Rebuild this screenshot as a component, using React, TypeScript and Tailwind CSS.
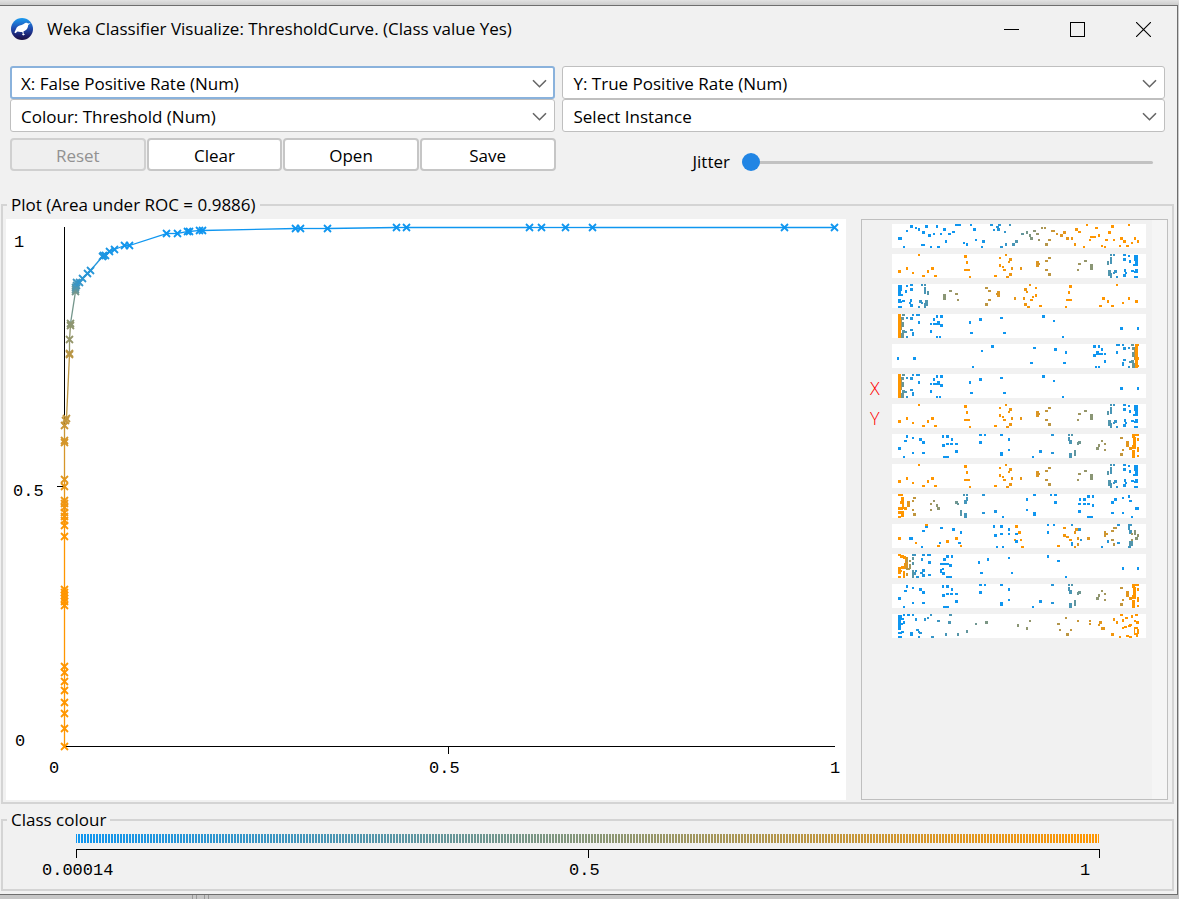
import type { ReactNode } from "react";

type Stop = [number, number];

function shade(t: number): string {
  const r = Math.round(t * 240 + 15);
  const b = Math.round((1 - t) * 240);
  return `rgb(${r},150,${b})`;
}

function at(stops: Stop[], x: number): number {
  if (x <= stops[0][0]) return stops[0][1];
  for (let i = 1; i < stops.length; i++) {
    const [x1, t1] = stops[i];
    const [x0, t0] = stops[i - 1];
    if (x <= x1) return t0 + ((t1 - t0) * (x - x0)) / (x1 - x0);
  }
  return stops[stops.length - 1][1];
}

type Mark = { x: number; y: number; w: number; h: number; t: number };

/* Each mark is "x,y,w,h" with an optional fifth value that fixes its shade. */
function marks(data: string, stops: Stop[]): Mark[] {
  return data
    .trim()
    .split(/\s+/)
    .map((item) => {
      const [x, y, w, h, t] = item.split(",").map(Number);
      return { x, y, w, h, t: t === undefined ? at(stops, x) : t };
    });
}

function mirror(list: Mark[]): Mark[] {
  return list.map((m) => ({ ...m, x: 252 - m.x - m.w }));
}

const sampleSize = marks(
  `6,13,4,3 11,22,2,2 14,6,2,2 18,1,3,3 23,3,2,2 26,4,2,3 29,20,4,2 30,7,3,3 33,1,3,3 36,10,3,3 38,22,2,2
  41,9,2,2 44,1,2,3 45,22,3,2 48,9,2,2 51,4,3,3 53,16,2,3 56,9,3,2 60,7,3,2 63,0,6,2 71,18,2,2 74,19,2,3
  78,0,2,2 81,4,3,3 83,15,2,2 89,22,2,2 90,16,3,3 98,0,3,2 101,5,2,2 104,2,3,2 106,0,3,2 105,4,3,3
  108,22,3,2 112,7,2,2 113,19,2,3 117,0,2,2 120,19,3,3 123,16,3,3 129,9,3,2 134,7,2,3 137,10,2,3
  138,13,3,3 141,6,3,2 144,9,3,2 146,15,2,2 149,3,2,2 152,3,2,2 153,19,3,3 156,15,3,2 159,6,4,2 164,9,2,2
  168,10,3,3 171,7,3,3 174,13,3,3 179,13,2,3 182,19,2,3 183,4,3,3 186,7,3,2 191,22,2,2 194,0,2,2
  197,15,2,2 198,12,6,2 203,3,3,2 206,10,2,3 209,21,2,2 212,22,2,2 213,15,3,2 216,7,3,3 219,1,3,3
  221,15,2,2 227,21,2,2 228,13,3,3 231,16,3,3 234,21,3,2 236,0,2,2 239,18,2,2 242,13,2,3 245,16,2,3`,
  [[80, 0], [105, 0.1], [117, 0.2], [129, 0.35], [140, 0.5], [150, 0.65], [165, 0.85], [190, 1]],
);

const truePositives = marks(
  `6,16,3,3 14,13,2,3 20,18,2,2 26,0,2,2 30,21,3,2 35,16,2,3 39,13,3,3 42,21,3,2 72,1,3,3 74,7,2,3
  72,15,6,2 77,22,2,2 102,21,3,2 107,3,2,2 107,10,2,3 110,12,2,2 111,15,3,2 113,0,2,2 114,22,3,2
  117,4,3,3 116,7,2,2 119,13,2,3 117,19,3,3 128,13,2,3 144,7,3,6 146,9,2,2 153,6,3,2 156,3,3,2
  153,15,3,2 156,19,3,3 185,15,2,2 186,9,3,2 192,6,3,2 198,10,3,6 215,7,2,4 218,0,2,2 221,0,2,2
  218,3,2,7 216,16,3,6 218,19,2,5 221,18,2,2 222,16,3,3 224,22,2,2 231,0,3,2 231,4,3,3 236,1,2,2
  237,6,2,3 232,15,2,3 231,20,3,3 233,18,2,2 239,16,3,2 242,1,4,6 243,7,3,5 241,10,3,2 243,15,3,3
  242,17,4,2 242,22,4,2`,
  [[106, 1], [117, 0.93], [144, 0.85], [156, 0.72], [186, 0.6], [200, 0.5], [216, 0.28], [225, 0.1], [235, 0]],
);

const falsePositives = marks(
  `10,0,3,2 9,3,3,3 9,8,3,3 9,11,3,2 10,16,3,3 12,17,3,2 9,19,3,5 9,5,1,11,0.6 6,0,3,24 14,22,2,2 14,3,2,2
  20,0,2,2 18,3,3,3 18,15,3,2 20,18,2,4 24,0,4,2 26,7,2,3 38,9,2,2 38,16,2,3 41,4,2,3 41,9,4,2 44,1,2,3
  45,7,3,4 48,1,3,3 48,10,3,3 44,22,2,2 47,22,2,2 77,7,2,3 78,18,3,2 87,4,3,3 108,3,3,2 111,18,3,2
  150,1,3,3 161,6,2,2 170,22,2,2 228,13,3,3 245,13,2,3`,
  [[7, 1], [8, 0.4], [12, 0.25], [14, 0.12], [22, 0.05], [30, 0]],
);

const trueNegatives = [...mirror(falsePositives), ...marks("245,0,2,2 245,13,2,3 245,21,2,2", [[0, 1]])];

const precision = marks(
  `6,13,3,3 11,22,2,2 12,6,3,2 14,1,2,3 20,3,2,2 20,18,2,2 27,4,3,3 30,7,3,3 30,18,3,2 50,1,2,3 50,10,3,3
  54,1,3,3 54,9,3,2 51,22,6,2 59,4,2,3 58,9,3,2 63,9,3,2 63,16,3,3 87,0,3,2 92,0,2,2 87,7,3,3 108,0,3,2
  108,18,3,4 116,4,2,3 116,15,2,2 140,22,2,2 147,16,3,3 159,0,3,2 159,18,3,2 176,0,2,2 179,0,2,2
  176,3,2,4 177,6,3,4 177,19,3,5 182,16,2,6 185,8,2,3 186,7,3,3 204,13,3,3 206,10,2,3 209,6,2,2
  212,9,2,2 212,15,2,2 228,3,3,2 230,15,2,2 228,19,3,3 234,7,3,6 237,13,3,3 240,0,3,4 241,3,3,8
  240,11,4,4 240,16,3,8 243,0,4,2 245,4,2,3 245,13,2,5 245,21,2,2`,
  [[140, 0], [160, 0.1], [177, 0.25], [186, 0.4], [204, 0.52], [212, 0.62], [228, 0.75], [236, 0.92], [240, 1]],
);

const fallout = marks(
  `6,0,5,2 9,3,3,5 8,7,4,3 10,10,2,5 6,13,5,3 6,17,3,3 9,17,3,6 6,22,3,2 15,7,3,6 12,13,3,3 20,6,2,2
  21,3,3,2 20,15,2,2 21,19,3,3 38,9,2,2 38,15,2,2 41,6,2,2 44,10,2,3 45,13,3,3 63,7,3,3 65,9,2,2
  68,16,2,6 71,0,2,2 74,0,2,2 74,3,2,4 72,6,3,4 72,19,3,5 90,0,3,2 90,18,3,2 102,16,3,3 110,22,2,2
  134,4,2,3 134,15,2,2 141,0,3,2 141,18,3,4 158,0,2,2 162,0,3,2 162,7,3,3 186,9,3,2 186,16,3,3
  187,4,2,3 191,9,3,2 191,4,3,3 195,1,3,3 200,1,2,3 195,9,3,2 200,10,2,3 195,22,6,2 219,7,3,3
  222,4,3,3 219,18,3,2 230,3,2,2 230,18,2,2 236,1,2,3 237,6,3,2 243,13,4,3 239,22,2,2`,
  [[11, 1], [15, 0.88], [20, 0.75], [38, 0.62], [45, 0.52], [63, 0.4], [72, 0.22], [90, 0.1], [110, 0]],
);

const fMeasure = marks(
  `33,0,3,2,1 33,2,3,2,0 30,6,3,2,0 48,3,3,2,0 60,4,3,3,0 68,7,2,3,0 6,13,3,3,1 17,13,4,3,0 23,18,2,2,1
  29,22,2,2,0 45,21,3,2,1 47,18,2,2,0 54,16,3,3,1 63,13,3,3,1 66,18,3,2,0 68,21,2,2,1 101,1,2,3,0
  102,10,3,3,0 104,22,2,2,0 108,1,3,3,0 108,9,3,2,0 110,22,2,2,0 116,4,2,3,0 116,9,2,2,0 123,1,3,3,1
  126,7,3,3,1 123,9,3,2,0 122,15,2,2,1 123,16,3,3,0 128,15,2,2,1 129,22,3,2,1 155,0,2,2,0 161,0,2,2,0
  155,7,2,3,0 165,21,3,2,1 171,3,3,2,0.95 171,10,3,3,0.95 174,12,3,2,0.95 179,0,2,2,0.1 183,4,3,3,0.9
  186,4,3,3,0.1 182,7,2,3,0.9 177,15,3,2,0.95 179,18,2,4,0.05 185,13,2,3,0.9 188,15,2,2,0.1
  185,19,2,3,0.85 182,22,2,2,0.9 195,13,3,3,0.85 209,22,2,2,0.05 212,7,2,6,0.8 214,9,2,2,0.8
  219,6,3,2,0.75 221,3,4,2,0.72 225,0,3,2,0.1 215,16,2,3,0.1 219,15,3,2,0.7 221,19,2,3,0.7
  225,18,3,2,0.1 236,0,4,2,0.2 236,2,2,4,0.2 237,6,3,4,0.22 239,9,2,2,0.6 242,6,2,5,0.5 245,10,2,3,0.55
  243,13,3,3,0.5 239,15,2,2,0.6 237,17,4,5,0.28 236,22,3,2,0.2`,
  [[0, 0]],
);

const sampleRatio = marks(
  `6,0,3,2 8,1,4,3 11,2,3,3 13,4,2,3,1 6,13,3,7 9,12,3,3 12,9,3,6,0.95 11,17,2,7 6,22,3,2 8,16,2,2
  13,7,3,8,0.85 14,3,2,2,0.8 14,5,2,3,0.7 17,6,2,2,0.6 17,10,2,5,0.6 14,14,4,2,0.65 14,19,2,3,0.8
  20,0,4,2,0.2 20,3,2,3,0.35 20,8,2,3,0.3 20,16,2,8,0.3 22,18,2,3,0.2 23,16,2,2,0.15 24,22,3,2,0.1
  29,4,2,3 30,0,3,2 35,0,4,2 36,7,3,3 30,15,3,3 28,18,3,2 30,20,3,3 36,20,3,2 48,15,2,4 50,14,2,2
  51,4,3,3 54,1,3,3 59,1,2,3 48,9,9,2 57,10,3,3 50,18,3,3 54,22,6,2 86,7,2,3 95,4,2,3 88,18,3,2
  116,3,2,2 119,18,2,2 155,1,2,3 165,6,3,2 173,22,2,2 230,13,2,3 245,13,2,3`,
  [[13, 1], [28, 0.08], [40, 0]],
);

const threshold = marks(
  `6,1,4,5 6,6,3,10 9,4,3,2 11,7,2,3 9,9,2,2 6,18,4,2 6,22,4,2 9,17,3,2 11,0,2,2 15,0,3,2 20,0,2,2 23,4,2,3
  18,18,3,4 24,15,3,2 26,17,2,2 27,18,3,2 26,22,2,2 32,4,2,3 35,3,2,2 38,0,2,2 39,22,3,2 45,6,3,2
  53,19,2,3 56,7,3,3 57,0,3,2 65,19,2,3 74,16,2,3 83,9,2,2 93,7,3,3 125,10,2,3 134,13,2,3 137,6,2,2
  165,9,3,2 167,15,2,2 173,3,2,2 174,19,3,3 178,15,2,2 185,6,2,2 197,6,2,2 197,9,2,2 207,7,3,3
  206,10,2,2 209,13,4,3 219,19,3,3 221,4,2,3 224,7,2,3 228,0,3,2 227,22,2,2 230,5,2,3 233,3,3,2
  232,12,3,2 230,13,2,2 236,11,3,2 237,10,3,2 234,21,3,2 237,22,3,2 239,1,2,3 243,0,3,2 242,6,2,2
  244,7,3,3 242,13,4,2 242,15,1,5 245,15,2,5 242,19,4,2 244,21,2,2`,
  [[15, 0], [30, 0.12], [56, 0.25], [93, 0.45], [130, 0.52], [165, 0.68], [197, 0.82], [220, 0.95], [230, 1]],
);

const attributes: { name: string; axis?: string; data: Mark[] }[] = [
  { name: "Instance number", data: sampleSize },
  { name: "True Positives", data: truePositives },
  { name: "False Negatives", data: mirror(truePositives) },
  { name: "False Positives", data: falsePositives },
  { name: "True Negatives", data: trueNegatives },
  { name: "False Positive Rate", axis: "X", data: falsePositives },
  { name: "True Positive Rate", axis: "Y", data: truePositives },
  { name: "Precision", data: precision },
  { name: "Recall", data: truePositives },
  { name: "Fallout", data: fallout },
  { name: "FMeasure", data: fMeasure },
  { name: "Sample Size", data: sampleRatio },
  { name: "Lift", data: precision },
  { name: "Threshold", data: threshold },
];

/* Curve points in plot coordinates: x, y, threshold. */
const curve: [number, number, number][] = [
  [58, 527, 1], [58, 509, 1], [58, 494, 1], [58, 483, 1], [58, 471, 1], [58, 462, 1], [58, 453, 1], [58, 447, 1],
  [58, 386, 1], [58, 382, 1], [58, 379, 1], [58, 376, 1], [58, 373, 1], [58, 370, 1], [58, 317, 1], [58, 306, 0.99],
  [58, 301, 0.98], [58, 297, 0.97], [58, 293, 0.96], [58, 288, 0.95], [58, 284, 0.94], [58, 281, 0.93],
  [58, 267, 0.9], [58, 260, 0.88], [58, 223, 0.83], [58, 221, 0.82], [58, 206, 0.78], [59, 201, 0.76],
  [60, 199, 0.75], [63, 135, 0.72], [63, 134, 0.7], [63, 120, 0.56], [64, 106, 0.54], [64, 104, 0.52],
  [69, 72, 0.42], [69, 70, 0.36], [69, 68, 0.3], [70, 66, 0.24], [70, 63, 0.2], [73, 63, 0.16], [76, 59, 0.13],
  [81, 54, 0.11], [84, 51, 0.1], [96, 37, 0.08], [97, 36, 0.07], [99, 36, 0.06], [103, 32, 0.04], [108, 30, 0.03],
  [118, 26, 0.02], [123, 26, 0.01], [160, 14, 0], [171, 14, 0], [181, 12, 0], [183, 12, 0], [193, 11, 0],
  [196, 11, 0], [289, 9, 0], [294, 9, 0], [321, 9, 0], [390, 8, 0], [400, 8, 0], [523, 8, 0], [535, 8, 0],
  [559, 8, 0], [586, 8, 0], [778, 8, 0], [828, 8, 0],
];

function WekaIcon() {
  return (
    <svg width="22" height="22" viewBox="0 0 22 22" aria-hidden="true">
      <defs>
        <linearGradient id="weka" x1="0" y1="0" x2="0" y2="1">
          <stop offset="0" stopColor="#1b9cf0" />
          <stop offset="0.45" stopColor="#1f4fb4" />
          <stop offset="0.8" stopColor="#1c1f6b" />
          <stop offset="1" stopColor="#1c1040" />
        </linearGradient>
      </defs>
      <circle cx="11" cy="11" r="11" fill="url(#weka)" />
      <path
        d="M3.4 14.6 4.8 11.4C5.8 8.8 8 7.4 10.6 7.1 12.3 6.8 13.1 5.2 14.9 4.8 15.8 4.6 16.6 4.9 17 5.4L19.6 5.3 17.2 6.9C16.9 9.2 16.4 11.3 14.2 12.6L12.4 13.6 12.7 15.8 14 16.6 12.2 17.4 11 16.4 11.8 15.8 11.3 14 9.5 13.9 6.5 13.6 4.4 15.3Z"
        fill="#fff"
      />
    </svg>
  );
}

function Combo({ label, value, focused }: { label: string; value: string; focused?: boolean }) {
  return (
    <div className="relative">
      <select
        aria-label={label}
        className={
          focused
            ? "block h-[33px] w-full appearance-none rounded-[3px] border-2 border-[#8ab2dc] bg-white pt-[2px] pr-8 pl-[9px] text-[17px] leading-6 outline-none"
            : "block h-[33px] w-full appearance-none rounded-[3px] border border-[#bfbfbf] bg-white pt-[2px] pr-8 pl-[10px] text-[17px] leading-6 outline-none"
        }
      >
        <option>{value}</option>
      </select>
      <svg
        className="pointer-events-none absolute top-[13px] right-2"
        width="15"
        height="9"
        viewBox="0 0 15 9"
        fill="none"
        stroke="#666"
        strokeWidth="1.6"
        aria-hidden="true"
      >
        <path d="M1 1.2 7.5 7.7 14 1.2" />
      </svg>
    </div>
  );
}

function PushButton({ children, disabled }: { children: ReactNode; disabled?: boolean }) {
  return (
    <button
      type="button"
      disabled={disabled}
      className="h-[33px] flex-1 rounded-[4px] border-2 border-[#c6c6c6] bg-white pt-[2px] text-[17px] leading-6 disabled:border-[#d0d0d0] disabled:bg-[#efefef] disabled:text-[#929292]"
    >
      {children}
    </button>
  );
}

function Group({ title, children }: { title: string; children: ReactNode }) {
  return (
    <fieldset className="mr-[3px] ml-px min-w-0 border-2 border-[#d4d4d4]">
      <legend className="ml-1 px-1 text-[17px] leading-6">{title}</legend>
      {children}
    </fieldset>
  );
}

function Plot() {
  return (
    <svg
      className="block h-auto w-full bg-white font-['Liberation_Mono',monospace] text-[17px]"
      viewBox="0 0 840 581"
      role="img"
      aria-label="Threshold curve"
    >
      <path
        d="M58.5 8V528M58 527.5H829M51 267.5H58M442.5 528V535"
        fill="none"
        stroke="#000"
        shapeRendering="crispEdges"
      />
      <g strokeWidth="1.3" strokeLinecap="square">
        {curve.slice(1).map(([x, y, t], i) => (
          <line key={i} x1={curve[i][0] + 0.5} y1={curve[i][1] + 0.5} x2={x + 0.5} y2={y + 0.5} stroke={shade(t)} />
        ))}
      </g>
      <g strokeWidth="1.8" fill="none">
        {curve.map(([x, y, t], i) => (
          <path key={i} d={`M${x - 3} ${y - 3}l7 7m0-7l-7 7`} stroke={shade(t)} />
        ))}
      </g>
      <g fill="#000">
        <text x="8" y="28">1</text>
        <text x="7" y="277">0.5</text>
        <text x="9" y="527">0</text>
        <text x="43" y="554">0</text>
        <text x="423" y="554">0.5</text>
        <text x="824" y="554">1</text>
      </g>
    </svg>
  );
}

function Strip({ name, data }: { name: string; data: Mark[] }) {
  return (
    <svg
      className="block h-6 w-[254px] bg-white"
      viewBox="0 0 254 24"
      shapeRendering="crispEdges"
      role="img"
      aria-label={name}
    >
      {data.map((m, i) => (
        <rect key={i} x={m.x} y={m.y} width={m.w} height={m.h} fill={shade(m.t)} />
      ))}
    </svg>
  );
}

function ColourScale() {
  const bars = Array.from({ length: 342 }, (_, i) => i);
  return (
    <svg
      className="block h-auto w-full font-['Liberation_Mono',monospace] text-[17px]"
      viewBox="0 0 1169 57"
      role="img"
      aria-label="Class colour scale"
    >
      <g shapeRendering="crispEdges">
        {bars.map((i) => (
          <rect
            key={i}
            x={i === 0 ? 73 : 72 + i * 3}
            y="2"
            width={i === 0 || i === 341 ? 1 : 2}
            height="9"
            fill={shade(i / 341)}
          />
        ))}
        <path d="M73.5 26V17.5H1096.5V26M585.5 17V26" fill="none" stroke="#000" />
      </g>
      <g fill="#000">
        <text x="39" y="43">0.00014</text>
        <text x="566" y="43">0.5</text>
        <text x="1077" y="43">1</text>
      </g>
    </svg>
  );
}

export default function App() {
  return (
    <div className="min-h-screen bg-[linear-gradient(#e2e2e2,#cccccc_5px,#c4c4c4)] pt-[5px] pr-px font-['Open_Sans','Noto_Sans',sans-serif] text-black">
      <main className="border-t border-r border-b border-[#6e6e6e] bg-[#f1f1f1] pb-[3px]">
        <header className="flex h-[46px] items-center pr-px pl-[11px]">
          <WekaIcon />
          <h1 className="ml-[14px] flex-1 text-[17px] leading-6">
            Weka Classifier Visualize: ThresholdCurve. (Class value Yes)
          </h1>
          <div className="flex">
            <button type="button" aria-label="Minimize" className="flex h-11 w-[66px] items-center justify-center">
              <svg width="15" height="15" viewBox="0 0 15 15" stroke="#000" fill="none" shapeRendering="crispEdges">
                <path d="M0 7.5H15" />
              </svg>
            </button>
            <button type="button" aria-label="Maximize" className="flex h-11 w-[66px] items-center justify-center">
              <svg width="15" height="15" viewBox="0 0 15 15" stroke="#000" fill="none" shapeRendering="crispEdges">
                <path d="M.5 .5H14.5V14.5H.5Z" />
              </svg>
            </button>
            <button type="button" aria-label="Close" className="flex h-11 w-[66px] items-center justify-center">
              <svg width="15" height="15" viewBox="0 0 15 15" stroke="#000" fill="none" strokeWidth="1.1">
                <path d="M0 0 15 15M15 0 0 15" />
              </svg>
            </button>
          </div>
        </header>

        <div className="grid grid-cols-[545fr_602fr] gap-x-[7px] pt-[14px] pr-3 pl-[10px]">
          <Combo label="X axis" value="X: False Positive Rate (Num)" focused />
          <Combo label="Y axis" value="Y: True Positive Rate (Num)" />
          <Combo label="Colour" value="Colour: Threshold (Num)" />
          <Combo label="Instance shape" value="Select Instance" />
          <div className="mt-[6px] flex items-start gap-px">
            <PushButton disabled>Reset</PushButton>
            <PushButton>Clear</PushButton>
            <PushButton>Open</PushButton>
            <PushButton>Save</PushButton>
          </div>
          <div className="mt-[18px] flex h-6 items-center pr-3 pl-[130px]">
            <label htmlFor="jitter" className="w-[50px] text-[17px] leading-6">
              Jitter
            </label>
            <input
              id="jitter"
              type="range"
              min="0"
              max="50"
              defaultValue="0"
              className="h-[18px] min-w-0 flex-1 appearance-none bg-transparent [&::-webkit-slider-runnable-track]:h-[3px] [&::-webkit-slider-runnable-track]:rounded-full [&::-webkit-slider-runnable-track]:bg-[#c2c2c2] [&::-webkit-slider-thumb]:-mt-2 [&::-webkit-slider-thumb]:size-[18px] [&::-webkit-slider-thumb]:appearance-none [&::-webkit-slider-thumb]:rounded-full [&::-webkit-slider-thumb]:bg-[#2185e4]"
            />
          </div>
        </div>

        <div className="mt-[19px] flex flex-col gap-1">
          <Group title="Plot (Area under ROC = 0.9886)">
            <div className="flex items-start gap-[15px] pt-[2px] pr-1 pb-[2px] pl-[3px]">
              <div className="min-w-0 flex-1">
                <Plot />
              </div>
              <div className="flex w-[307px] justify-between self-stretch border border-[#bfbfbf]">
                <ul className="flex flex-col gap-[6px] pt-1">
                  {attributes.map((a) => (
                    <li key={a.name} className="flex h-6 items-center">
                      <span className="w-[30px] pt-1 pl-2 text-[18px] leading-6 font-light text-[#ff0000]">
                        {a.axis}
                      </span>
                      <Strip name={a.name} data={a.data} />
                    </li>
                  ))}
                </ul>
                <div className="w-[15px] bg-[#f5f5f5]" />
              </div>
            </div>
          </Group>
          <Group title="Class colour">
            <ColourScale />
          </Group>
        </div>
      </main>
      <footer className="flex h-1 gap-[3px] bg-[#c6c6c6] pl-[192px]">
        <span className="w-px bg-[#999]" />
        <span className="w-px bg-[#999]" />
        <span className="ml-1 w-px bg-[#999]" />
        <span className="w-px bg-[#999]" />
      </footer>
    </div>
  );
}
